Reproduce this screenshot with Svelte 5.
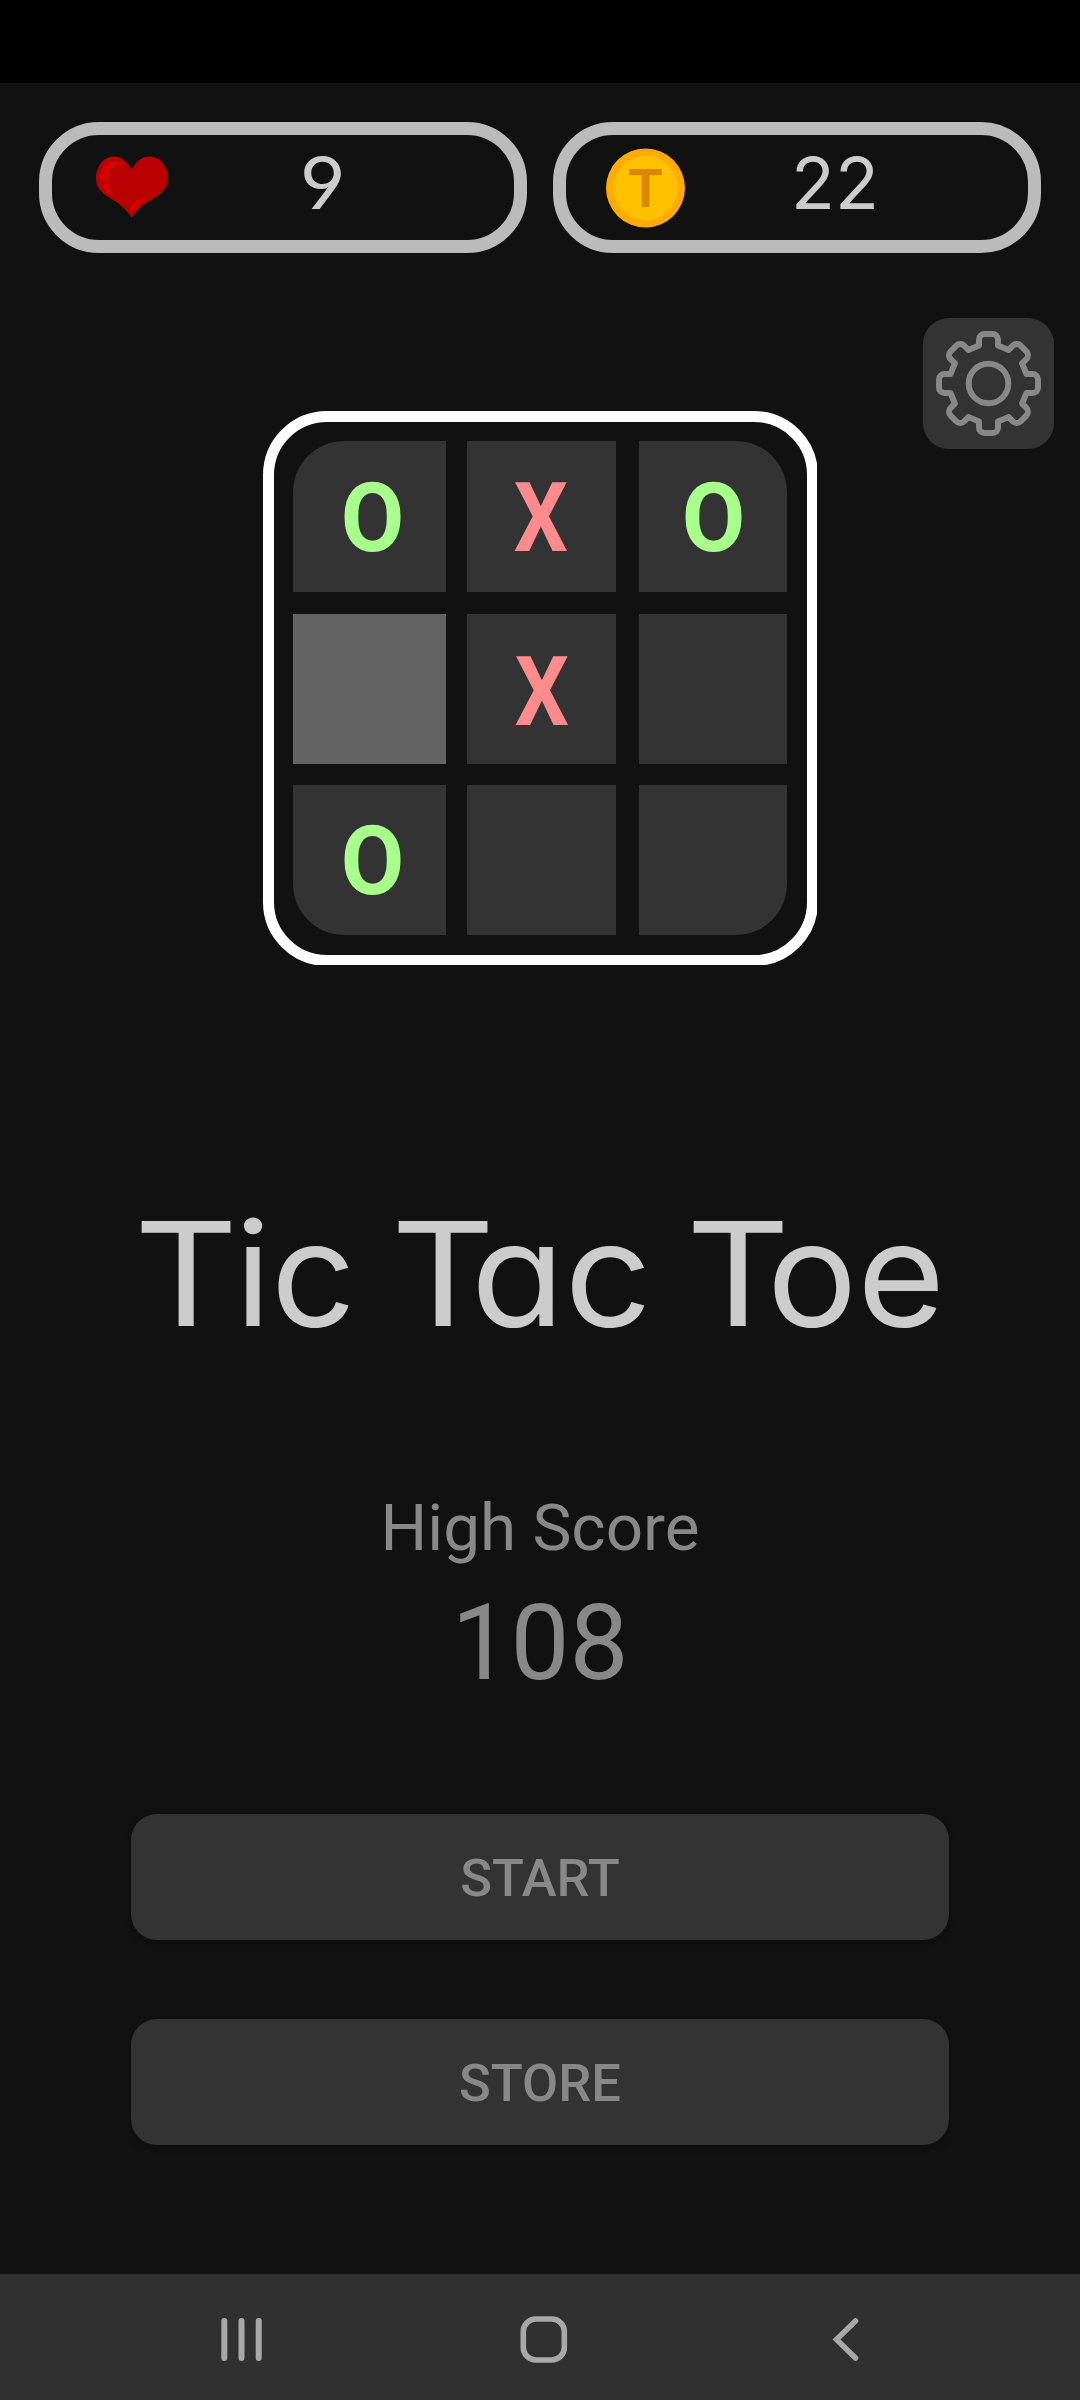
<script>
  const cells = ['O', 'X', 'O', '', 'X', '', 'O', '', ''];
  const selected = 3;
  const lives = 9;
  const coins = 22;
  const highScore = 108;

  // Eight identical rounded teeth, each rotated by 45 degrees around the centre.
  function gearPath() {
    const parts = [];
    for (let i = 0; i < 8; i++) {
      const a = (i * Math.PI) / 4;
      const p = (x, y) =>
        `${(x * Math.cos(a) - y * Math.sin(a)).toFixed(2)} ${(x * Math.sin(a) + y * Math.cos(a)).toFixed(2)}`;
      parts.push(
        `${i ? 'L' : 'M'}${p(-9.5, -38)} L${p(-9.5, -44)} A5.5 5.5 0 0 1 ${p(-4, -49.5)} L${p(4, -49.5)} A5.5 5.5 0 0 1 ${p(9.5, -44)} L${p(9.5, -38)}`
      );
    }
    return parts.join(' ') + 'Z';
  }
  const gear = gearPath();
</script>

<div class="screen">
  <div class="status"></div>

  <header class="counters">
    <div class="pill lives">
      <svg class="heart" width="72" height="62" viewBox="0 0 72 62">
        <path fill="#b80000" d="M35.5 14C40 5 46 .5 53 .5C64 .5 72 10 72 22C72 31 67 37 58 42C48 48 40 54 35.500 62C31 54 24 48 14 42C5 37 0 31 0 22C0 10 8 .5 18 .5C25 .5 31 5 35.500 14Z" />
        <path fill="#d90000" d="M28 9C22 4 13 5 8 11C4 15 3 21 5 24C8 28 11 25 11.500 21C13 14 18 9 28 9Z" />
        <path fill="#d90000" d="M7 29C9 26 12 26 13 31C14 36 16 38 18 41C11 38 7 34 7 29Z" />
        <path fill="#d90000" d="M51 42C43 41 37 47 33.500 53C32 56 35 57 37 54C41 48 45 46 51 42Z" />
      </svg>
      <span class="count">{lives}</span>
    </div>
    <div class="pill coins">
      <svg width="79" height="80" viewBox="0 0 79 80">
        <circle cx="39.500" cy="40" r="39.500" fill="#ffab00" />
        <circle cx="39.500" cy="40" r="32.300" fill="#ffc000" />
        <text class="coin-letter" x="39.500" y="59" text-anchor="middle">T</text>
      </svg>
      <span class="count">{coins}</span>
    </div>
  </header>

  <div class="toolbar">
    <button class="settings" aria-label="Settings">
      <svg width="131" height="131" viewBox="-65.5 -65.5 131 131" fill="none" stroke="#888" stroke-width="6" stroke-linejoin="round">
        <path d={gear} />
        <circle r="19.800" />
      </svg>
    </button>
  </div>

  <div class="logo">
    <div class="board">
      {#each cells as mark, i}
        <div class="cell c{i}" class:selected={i === selected}>
          <span class={mark === 'O' ? 'o' : 'x'}>{mark}</span>
        </div>
      {/each}
    </div>
  </div>

  <h1>
    <span class="word"><span class="cap">T</span><span class="rest narrow">ic</span></span>
    <span class="word"><span class="cap tight">T</span><span class="rest">ac</span></span>
    <span class="word"><span class="cap tight">T</span><span class="rest last">oe</span></span>
  </h1>

  <section class="score">
    <div class="label">High Score</div>
    <div class="value">{highScore}</div>
  </section>

  <div class="actions">
    <button>START</button>
    <button>STORE</button>
  </div>

  <nav>
    <svg width="1080" height="126" viewBox="0 0 1080 126" fill="none" stroke="#a8a8a8" stroke-linecap="round">
      <path stroke-width="6" d="M224.300 47V84M241.500 47V84M258.700 47V84" />
      <rect x="523.300" y="45" width="41" height="41" rx="12.500" stroke-width="5.600" />
      <path stroke-width="5.500" d="M855.500 47L836.500 65.500L855.500 84" />
    </svg>
  </nav>
</div>

<style>
  :global(body) {
    margin: 0;
    background: #111;
  }
  .screen {
    width: 1080px;
    height: 2400px;
    background: #111;
    display: flex;
    flex-direction: column;
    font-family: Roboto, sans-serif;
    overflow: hidden;
  }
  .status {
    height: 83px;
    background: #000;
  }
  .counters {
    display: flex;
    gap: 26px;
    padding: 39px 39px 0;
  }
  .pill {
    box-sizing: border-box;
    width: 488px;
    height: 131px;
    border: 13px solid #bbb;
    border-radius: 60px;
    display: flex;
    align-items: center;
  }
  .lives {
    padding-left: 44px;
  }
  .heart {
    margin-top: -2px;
  }
  .coins {
    padding-left: 40px;
  }
  .count {
    flex: 1;
    font: 400 72px/105px Inter, sans-serif;
    font-feature-settings: 'cv04';
    color: #ccc;
    text-align: center;
    padding-right: 37px;
    margin-top: -11px;
  }
  .lives .count {
    transform: scaleX(1.1);
    transform-origin: calc(50% - 18px) 50%;
  }
  .coins .count {
    padding-right: 43px;
  }
  .coin-letter {
    font: 700 55px 'Liberation Sans', sans-serif;
    fill: #d98800;
  }
  .toolbar {
    display: flex;
    justify-content: flex-end;
    padding: 65px 26px 0;
    height: 93px;
  }
  button {
    border: 0;
    padding: 0;
    background: #333;
    color: #888;
    border-radius: 26px;
  }
  .settings {
    width: 131px;
    height: 131px;
  }
  .settings svg {
    display: block;
  }
  .logo {
    align-self: center;
    width: 554px;
    height: 554px;
    overflow: hidden;
  }
  .board {
    box-sizing: border-box;
    width: 555px;
    height: 555px;
    border: 11px solid #fff;
    border-radius: 64px;
    padding: 19px;
    display: grid;
    grid-template-columns: 174px 172px 148px;
    grid-template-rows: 151px 150px 150px;
    row-gap: 21.500px;
  }
  .cell {
    background: #333;
    display: flex;
    align-items: center;
    justify-content: center;
    padding-top: 3px;
    font: 700 97px/1 Roboto, sans-serif;
  }
  .cell:nth-child(3n + 1) {
    margin-right: 21px;
    padding-left: 5px;
  }
  .cell:nth-child(3n + 2) {
    margin-right: 23px;
    padding-right: 2px;
  }
  .cell.selected {
    background: #636363;
  }
  .c0 {
    border-top-left-radius: 51px;
  }
  .c2 {
    border-top-right-radius: 51px;
  }
  .cell.c4 {
    padding: 8px 0 0 1px;
  }
  .c6 {
    border-bottom-left-radius: 51px;
  }
  .c8 {
    border-bottom-right-radius: 51px;
  }
  .o {
    color: #a8ff8c;
    transform: scaleX(0.95);
  }
  .x {
    color: #ff8c8c;
    transform: scaleX(0.88);
  }
  h1 {
    display: flex;
    margin: 224px 0 0;
    padding-left: 134px;
    font: 400 144px/170px Inter, sans-serif;
    font-feature-settings: 'cv11';
    color: #ccc;
    white-space: nowrap;
  }
  .word {
    display: flex;
    width: 295px;
  }
  .word:first-child {
    width: 257px;
  }
  .cap {
    width: 101px;
    transform: scaleX(1.12);
    transform-origin: left;
  }
  .cap.tight {
    width: 80px;
  }
  .rest {
    transform: scaleX(1.06);
    transform-origin: left;
  }
  .rest.narrow {
    transform: scaleX(1.03);
  }
  .rest.last {
    margin-left: 1px;
    transform: scaleX(1.045);
  }
  .score {
    margin-top: 130px;
    color: #888;
    text-align: center;
  }
  .label {
    font-size: 65.600px;
    line-height: 77px;
  }
  .value {
    margin-top: 16px;
    font-size: 105px;
    line-height: 123px;
  }
  .actions {
    display: flex;
    flex-direction: column;
    gap: 79px;
    padding: 0 131px;
    margin-top: 109px;
  }
  .actions button {
    height: 126px;
    padding-top: 2px;
    font: 500 52.500px/124px Roboto, sans-serif;
    box-shadow: 0 3px 8px rgba(0, 0, 0, 0.25);
  }
  nav {
    margin-top: auto;
    height: 126px;
    background: #303030;
  }
  nav svg {
    display: block;
  }
</style>
